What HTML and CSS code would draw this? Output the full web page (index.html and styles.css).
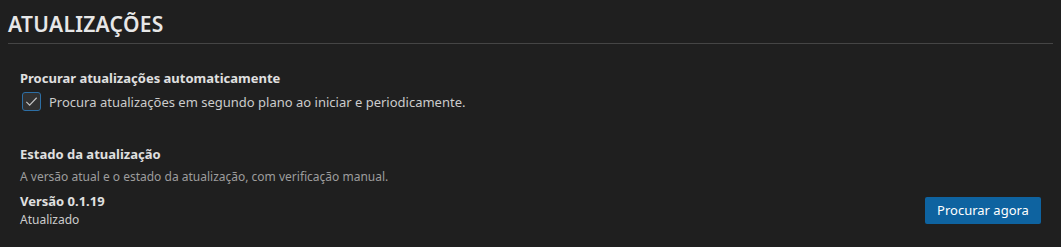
FILE: index.html
```html
<!DOCTYPE html>
<html lang="pt">
<head>
    <meta charset="UTF-8">
    <title>Atualizações</title>
    <link rel="stylesheet" href="styles.css">
</head>
<body>
    <div class="page">
        <h2 class="page-title">ATUALIZAÇÕES</h2>

        <div class="setting setting-first">
            <div class="setting-title">Procurar atualizações automaticamente</div>
            <label class="check-row">
                <span class="checkbox">
                    <svg width="15" height="15" viewBox="0 0 16 16">
                        <path d="M2.5 8.5 L6 12 L13.5 4" fill="none" stroke="#c5c5c5" stroke-width="1.2"/>
                    </svg>
                </span>
                <span class="check-label">Procura atualizações em segundo plano ao iniciar e periodicamente.</span>
            </label>
        </div>

        <div class="setting setting-next">
            <div class="setting-title">Estado da atualização</div>
            <div class="setting-desc">A versão atual e o estado da atualização, com verificação manual.</div>
            <div class="version-row">
                <div>
                    <div class="version">Versão 0.1.19</div>
                    <div class="status">Atualizado</div>
                </div>
                <button class="primary-btn">Procurar agora</button>
            </div>
        </div>
    </div>
</body>
</html>
```

FILE: styles.css
```css
body {
    margin: 0;
    background-color: #1f1f1f;
    font-family: 'Noto Sans', 'Open Sans', sans-serif;
    color: #cccccc;
}
.page {
    padding: 8px 8px 0 8px;
}
.page-title {
    margin: 0;
    font-size: 21px;
    font-weight: 600;
    letter-spacing: 0.3px;
    color: #e7e7e7;
    padding: 5px 0 8px 0;
    border-bottom: 1px solid #454545;
    line-height: 22px;
}
.setting {
    padding: 0 12px;
}
.setting-first {
    margin-top: 25px;
}
.setting-next {
    margin-top: 34px;
}
.setting-title {
    font-size: 13px;
    font-weight: 700;
    color: #e0e0e0;
    line-height: 18px;
}
.check-row {
    display: flex;
    align-items: center;
    margin-top: 5px;
    gap: 8px;
}
.checkbox {
    width: 19px;
    height: 19px;
    box-sizing: border-box;
    border: 1px solid #2d6fa5;
    border-radius: 3px;
    background-color: #313131;
    display: flex;
    align-items: center;
    justify-content: center;
    margin-left: 2px;
}
.check-label {
    font-size: 13px;
    color: #cccccc;
}
.setting-desc {
    font-size: 12px;
    color: #9d9d9d;
    margin-top: 6px;
    line-height: 16px;
}
.version-row {
    display: flex;
    justify-content: space-between;
    align-items: center;
    margin-top: 7px;
}
.version {
    font-size: 13px;
    font-weight: 700;
    color: #e0e0e0;
    line-height: 18px;
}
.status {
    font-size: 12px;
    color: #cccccc;
    margin-top: 2px;
    line-height: 16px;
}
.primary-btn {
    background-color: #0e63a0;
    color: #ffffff;
    border: none;
    border-radius: 2px;
    font-family: inherit;
    font-size: 13px;
    padding: 0 12px;
    height: 27px;
    width: 116px;
    cursor: pointer;
}
.primary-btn:hover {
    background-color: #1177bb;
}
```
